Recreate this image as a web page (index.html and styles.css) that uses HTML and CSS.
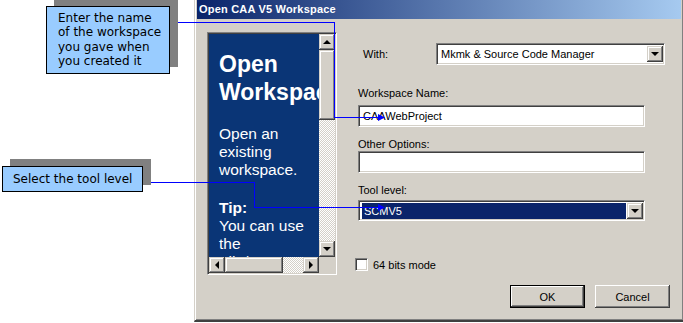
FILE: index.html
```html
<!DOCTYPE html>
<html lang="en">
<head>
    <meta charset="UTF-8">
    <title>Open CAA V5 Workspace</title>
    <link rel="stylesheet" href="styles.css">
</head>
<body>
    <div class="page">
        <div class="dialog">
            <div class="title-bar">Open CAA V5 Workspace</div>
            <div class="dialog-body">
                <div class="help-panel sunken">
                    <div class="help-text">
                        <p class="help-title">Open Workspace</p>
                        <p>Open an existing workspace.</p>
                        <p class="tip"><b>Tip:</b><br>You can use the File/Remote Workspace command.</p>
                    </div>
                    <div class="vscroll">
                        <div class="sb-btn raised"><span class="arrow up"></span></div>
                        <div class="sb-thumb raised"></div>
                        <div class="sb-track"></div>
                        <div class="sb-btn raised"><span class="arrow down"></span></div>
                    </div>
                    <div class="hscroll">
                        <div class="sb-btn raised"><span class="arrow left"></span></div>
                        <div class="sb-thumb raised"></div>
                        <div class="sb-track"></div>
                        <div class="sb-btn raised"><span class="arrow right"></span></div>
                    </div>
                    <div class="corner"></div>
                </div>

                <div class="form">
                    <div class="with-row">
                        <span class="with-label">With:</span>
                        <div class="combo combo-with sunken">
                            <span class="combo-value">Mkmk &amp; Source Code Manager</span>
                            <div class="combo-btn raised"><span class="arrow down"></span></div>
                        </div>
                    </div>

                    <label class="field-label label-name">Workspace Name:</label>
                    <div class="textbox textbox-name sunken">CAAWebProject</div>

                    <label class="field-label label-options">Other Options:</label>
                    <div class="textbox sunken"></div>

                    <label class="field-label label-level">Tool level:</label>
                    <div class="combo combo-level sunken">
                        <span class="combo-value selected">SCMV5</span>
                        <div class="combo-btn raised"><span class="arrow down"></span></div>
                    </div>

                    <div class="check-row">
                        <span class="checkbox sunken"></span>
                        <span>64 bits mode</span>
                    </div>

                    <div class="button-row">
                        <button class="btn btn-default raised">OK</button>
                        <button class="btn raised">Cancel</button>
                    </div>
                </div>
            </div>
        </div>

        <!-- callout connectors -->
        <svg class="connectors" width="683" height="323" viewBox="0 0 683 323">
            <polyline points="170,22.5 334.5,22.5 334.5,117.5 379,117.5" fill="none" stroke="#0000ff" stroke-width="1" shape-rendering="crispEdges"/>
            <polygon points="378,114 385,117.5 378,121" fill="#0000ff"/>
            <polyline points="150,182.5 254.5,182.5 254.5,207.5 379,207.5" fill="none" stroke="#0000ff" stroke-width="1" shape-rendering="crispEdges"/>
            <polygon points="378,204 385,207.5 378,211" fill="#0000ff"/>
        </svg>

        <div class="callout callout-name">Enter the name<br>of the workspace<br>you gave when<br>you created it</div>
        <div class="callout callout-level">Select the tool level</div>
    </div>
</body>
</html>
```

FILE: styles.css
```css
body {
    margin: 0;
    background: #fff;
    font-family: "Liberation Sans", Arial, sans-serif;
    font-size: 11px;
    color: #000;
}

.page {
    position: relative;
    width: 683px;
    height: 323px;
    overflow: hidden;
}

/* win2000 style bevels */
.sunken {
    border: 1px solid;
    border-color: #808080 #fff #fff #808080;
    box-shadow: inset 1px 1px #404040, inset -1px -1px #d4d0c8;
}

.raised {
    background: #d4d0c8;
    box-shadow: inset -1px -1px #404040, inset 1px 1px #d4d0c8, inset -2px -2px #808080, inset 2px 2px #fff;
}

.dialog {
    margin-left: 194px;
    width: 484px;
    height: 320px;
    padding: 0 2px 0 2px;
    background: #d4d0c8;
    border-left: 1px solid #d4d0c8;
    border-right: 1px solid #404040;
    border-bottom: 2px solid #404040;
    box-shadow: inset 1px 0 #fff, inset -1px -1px #808080;
}

.title-bar {
    height: 19px;
    line-height: 19px;
    padding-left: 2px;
    background: linear-gradient(to right, #0a246a, #a6caf0);
    color: #fff;
    font-weight: bold;
    font-size: 11px;
    letter-spacing: 0.2px;
}

.dialog-body {
    display: flex;
    align-items: flex-start;
}

/* left help panel */
.help-panel {
    margin: 13px 0 0 10px;
    padding: 1px;
    display: grid;
    grid-template-columns: 110px 16px;
    grid-template-rows: 223px 16px;
    background: #d4d0c8;
}

.help-text {
    background: #0a3576;
    color: #fff;
    overflow: hidden;
    padding: 16px 0 0 10px;
    font-size: 15.5px;
    line-height: 18px;
}

.help-text p {
    margin: 0;
}

.help-text .help-title {
    font-size: 23px;
    line-height: 28px;
    font-weight: bold;
    width: 60px;
    margin-bottom: 19px;
}

.help-text .tip {
    margin-top: 20px;
}

.vscroll {
    display: flex;
    flex-direction: column;
}

.hscroll {
    display: flex;
}

.sb-btn {
    width: 16px;
    height: 16px;
    flex: none;
    display: flex;
    align-items: center;
    justify-content: center;
}

.vscroll .sb-thumb {
    height: 70px;
}

.vscroll .sb-track {
    flex: 1;
}

.hscroll .sb-thumb {
    width: 58px;
}

.hscroll .sb-track {
    flex: 1;
}

.sb-track {
    background: repeating-conic-gradient(#fff 0 25%, #d4d0c8 0 50%) 0 0 / 2px 2px;
}

.corner {
    background: #d4d0c8;
}

.arrow {
    width: 0;
    height: 0;
    border: 4px solid transparent;
}

.arrow.up {
    border-bottom-color: #000;
    border-top-width: 0;
}

.arrow.down {
    border-top-color: #000;
    border-bottom-width: 0;
}

.arrow.left {
    border-right-color: #000;
    border-left-width: 0;
}

.arrow.right {
    border-left-color: #000;
    border-right-width: 0;
}

/* right hand form */
.form {
    margin: 24px 0 0 21px;
    width: 312px;
    display: flex;
    flex-direction: column;
}

.with-row {
    display: flex;
    align-items: center;
    height: 22px;
}

.with-label {
    width: 73px;
    padding-left: 5px;
}

.combo {
    display: flex;
    align-items: center;
    background: #fff;
    height: 20px;
    padding: 0 1px;
}

.combo-with {
    width: 225px;
}

.combo-value {
    flex: 1;
    padding-left: 3px;
}

.combo-value.selected {
    background: #0a246a;
    color: #fff;
    height: 16px;
    line-height: 16px;
    margin: 0 1px 0 2px;
    padding-left: 2px;
}

.combo-btn {
    width: 16px;
    height: 16px;
    display: flex;
    align-items: center;
    justify-content: center;
}

.field-label {
    display: block;
    line-height: 13px;
}

.label-name {
    margin: 22px 0 5px;
}

.label-options {
    margin-top: 11px;
}

.label-level {
    margin: 11px 0 3px;
}

.textbox {
    width: 281px;
    height: 20px;
    line-height: 20px;
    padding-left: 4px;
    background: #fff;
}

.combo-level {
    width: 283px;
    height: 19px;
}

.check-row {
    display: flex;
    align-items: center;
    gap: 5px;
    margin: 37px 0 0 -3px;
}

.checkbox {
    width: 11px;
    height: 11px;
    background: #fff;
}

.button-row {
    display: flex;
    justify-content: flex-end;
    gap: 10px;
    margin-top: 14px;
}

.btn {
    width: 75px;
    height: 23px;
    border: none;
    font-family: "Liberation Sans", Arial, sans-serif;
    font-size: 11px;
    color: #000;
    box-shadow: inset -1px -1px #404040, inset 1px 1px #fff, inset -2px -2px #808080, inset 2px 2px #d4d0c8;
}

.btn-default {
    border: 1px solid #000;
}

/* annotation overlay */
.connectors {
    position: absolute;
    top: 0;
    left: 0;
    pointer-events: none;
}

.callout {
    position: absolute;
    background: #99ccff;
    border: 1px solid #000;
    box-shadow: 8px -7px 0 #808080;
    font-family: "DejaVu Sans", Verdana, sans-serif;
    font-size: 12px;
    line-height: 14.4px;
    color: #000;
    box-sizing: border-box;
}

.callout-name {
    left: 46px;
    top: 6px;
    width: 124px;
    height: 68px;
    padding: 4px 0 0 11px;
}

.callout-level {
    left: 2px;
    top: 166px;
    width: 141px;
    height: 26px;
    padding: 5px 0 0 10px;
}
```
